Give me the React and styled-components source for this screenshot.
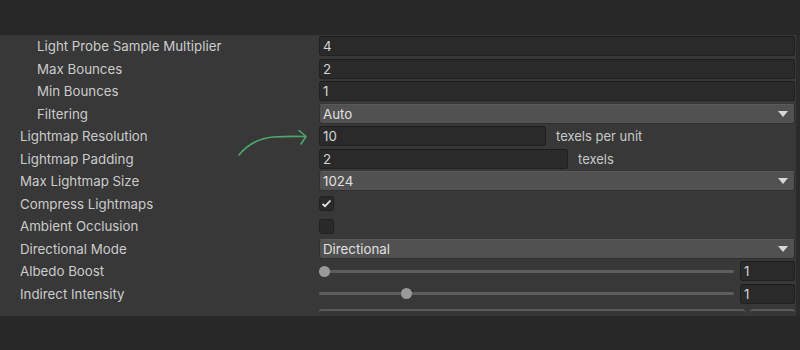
import React from "react";
import styled, { createGlobalStyle } from "styled-components";

const Global = createGlobalStyle`
  html, body { margin: 0; padding: 0; background: #282828; }
  body { font-family: Inter, "Noto Sans", sans-serif; }
  * { box-sizing: border-box; }
`;

const Page = styled.div`
  width: 800px;
  height: 350px;
  display: flex;
  flex-direction: column;
  background: #282828;
  overflow: hidden;
`;

const TopBar = styled.div`
  height: 35px;
  flex: none;
`;

const Body = styled.div`
  display: flex;
  height: 281px;
  flex: none;
`;

const Panel = styled.div`
  position: relative;
  width: 796px;
  background: #383838;
  overflow: hidden;
`;

const Strip = styled.div`
  flex: 1;
  background: #2b2b2b;
`;

const Row = styled.div`
  display: grid;
  grid-template-columns: 319px 1fr;
  align-items: ${(p) => (p.$top ? "start" : "center")};
  padding-top: ${(p) => (p.$top ? "4px" : "0")};
  height: 22.5px;
`;

const Label = styled.div`
  padding-left: ${(p) => (p.$indent ? 37 : 20)}px;
  color: #cbcbcb;
  font-size: 13.3px;
  white-space: nowrap;
`;

const Control = styled.div`
  display: flex;
  align-items: center;
  padding-right: 1px;
  min-width: 0;
`;

const Field = styled.div`
  height: 20px;
  width: ${(p) => (p.$w ? `${p.$w}px` : "auto")};
  flex: ${(p) => (p.$w ? "none" : "1")};
  margin-right: ${(p) => p.$gap || 0}px;
  background: #2a2a2a;
  border: 1px solid #212121;
  border-top-color: #1c1c1c;
  border-radius: 3px;
  color: #d4d4d4;
  font-size: 13.3px;
  line-height: 18px;
  padding-left: 3px;
  white-space: nowrap;
`;

const EdgeField = styled.div`
  height: 20px;
  width: ${(p) => (p.$w ? `${p.$w}px` : "auto")};
  flex: ${(p) => (p.$w ? "none" : "1")};
  margin-right: ${(p) => p.$gap || 0}px;
  border-top: 2px solid #5a5a5a;
  border-radius: 3px;
  background: #363636;
`;

const Suffix = styled.span`
  margin-left: 10px;
  color: #c8c8c8;
  font-size: 13px;
`;

const Dropdown = styled.div`
  flex: 1;
  height: 20px;
  display: flex;
  align-items: center;
  justify-content: space-between;
  background: #515151;
  border: 1px solid #303030;
  border-top-color: #5a5a5a;
  border-radius: 3px;
  color: #e0e0e0;
  font-size: 13.3px;
  padding: 0 6px 0 3px;
`;

const Caret = styled.span`
  width: 0;
  height: 0;
  border-left: 5px solid transparent;
  border-right: 5px solid transparent;
  border-top: 6px solid #d8d8d8;
`;

const Check = styled.div`
  width: 15px;
  height: 15px;
  background: #2a2a2a;
  border: 1px solid #212121;
  border-radius: 3px;
  display: flex;
  align-items: center;
  justify-content: center;
`;

const SliderWrap = styled.div`
  flex: 1;
  position: relative;
  height: 20px;
  display: flex;
  align-items: center;
  margin-right: 6px;
`;

const Track = styled.div`
  flex: 1;
  height: 3px;
  background: #5e5e5e;
  border-radius: 2px;
`;

const Thumb = styled.div`
  position: absolute;
  top: 50%;
  width: 11px;
  height: 11px;
  margin-left: -5.5px;
  margin-top: -5.5px;
  border-radius: 50%;
  background: #9a9a9a;
`;

const Arrow = styled.svg`
  position: absolute;
  left: 0;
  top: 0;
  pointer-events: none;
`;

const TextRow = ({ label, value, indent }) => (
  <Row>
    <Label $indent={indent}>{label}</Label>
    <Control>
      <Field>{value}</Field>
    </Control>
  </Row>
);

const DropRow = ({ label, value, indent }) => (
  <Row>
    <Label $indent={indent}>{label}</Label>
    <Control>
      <Dropdown>
        <span>{value}</span>
        <Caret />
      </Dropdown>
    </Control>
  </Row>
);

const SliderRow = ({ label, pos, value }) => (
  <Row>
    <Label>{label}</Label>
    <Control>
      <SliderWrap>
        <Track />
        <Thumb style={{ left: `${pos}px` }} />
      </SliderWrap>
      <Field $w={55}>{value}</Field>
    </Control>
  </Row>
);

export default function App() {
  return (
    <Page>
      <Global />
      <TopBar />
      <Body>
        <Panel>
          <TextRow indent label="Light Probe Sample Multiplier" value="4" />
          <TextRow indent label="Max Bounces" value="2" />
          <TextRow indent label="Min Bounces" value="1" />
          <DropRow indent label="Filtering" value="Auto" />
          <Row>
            <Label>Lightmap Resolution</Label>
            <Control>
              <Field $w={227}>10</Field>
              <Suffix>texels per unit</Suffix>
            </Control>
          </Row>
          <Row>
            <Label>Lightmap Padding</Label>
            <Control>
              <Field $w={249}>2</Field>
              <Suffix>texels</Suffix>
            </Control>
          </Row>
          <DropRow label="Max Lightmap Size" value="1024" />
          <Row>
            <Label>Compress Lightmaps</Label>
            <Control>
              <Check>
                <svg width="11" height="9" viewBox="0 0 11 9">
                  <path d="M1.5 4.8 L4 7.2 L9.5 1.5" fill="none" stroke="#e6e6e6" strokeWidth="1.8" />
                </svg>
              </Check>
            </Control>
          </Row>
          <Row>
            <Label>Ambient Occlusion</Label>
            <Control>
              <Check />
            </Control>
          </Row>
          <DropRow label="Directional Mode" value="Directional" />
          <SliderRow label="Albedo Boost" pos={5} value="1" />
          <SliderRow label="Indirect Intensity" pos={87} value="1" />
          <Row $top>
            <Label />
            <Control>
              <EdgeField $gap={5} />
              <EdgeField $w={45} />
            </Control>
          </Row>
          <Arrow width="320" height="140">
            <path d="M239 120 Q252 104 273 102 Q288 101 305 101.5" fill="none" stroke="#4ea56c" strokeWidth="1.6" strokeLinecap="round" />
            <path d="M299 95.5 L306 101.5 L301 109" fill="none" stroke="#4ea56c" strokeWidth="1.6" strokeLinecap="round" strokeLinejoin="round" />
          </Arrow>
        </Panel>
        <Strip />
      </Body>
    </Page>
  );
}
